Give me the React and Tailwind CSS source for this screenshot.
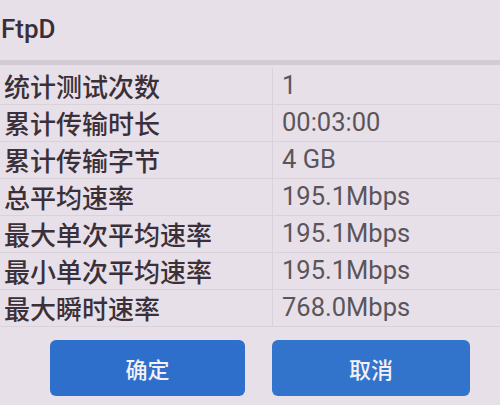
import React from "react";

const rows = [
  ["统计测试次数", "1"],
  ["累计传输时长", "00:03:00"],
  ["累计传输字节", "4 GB"],
  ["总平均速率", "195.1Mbps"],
  ["最大单次平均速率", "195.1Mbps"],
  ["最小单次平均速率", "195.1Mbps"],
  ["最大瞬时速率", "768.0Mbps"],
];

export default function App() {
  return (
    <div
      className="w-[500px] h-[405px] overflow-hidden bg-[#e7e0e8] flex flex-col"
      style={{ fontFamily: 'Roboto, "Noto Sans CJK SC", sans-serif' }}
    >
      <div className="h-[60px] flex items-center pl-[1px] pb-[1px]">
        <span className="text-[26px] font-medium text-[#3a2f38]">FtpD</span>
      </div>
      <div className="h-[5px] bg-[#d2cbd3]" />
      <div className="mt-[3px] flex flex-col">
        {rows.map(([k, v]) => (
          <div key={k} className="h-[37px] flex border-b border-[#d9d2da]">
            <div className="w-[273px] shrink-0 flex items-center pl-[4px] border-r border-[#d9d2da]">
              <span
                className="text-[26px] leading-none text-[#3b3039] font-medium"
                style={{ fontFamily: '"Noto Sans CJK SC", sans-serif' }}
              >
                {k}
              </span>
            </div>
            <div className="flex-1 flex items-center pl-[9px]">
              <span className="text-[25.5px] leading-none text-[#5b555b]">{v}</span>
            </div>
          </div>
        ))}
      </div>
      <div className="mt-[13px] flex pl-[50px] gap-[27px]">
        <button
          className="w-[195px] h-[56px] rounded-[6px] bg-[#2d6fcb] text-[#f4f1f6] text-[22px] font-medium flex items-center justify-center"
          style={{ fontFamily: '"Noto Sans CJK SC", sans-serif' }}
        >
          确定
        </button>
        <button
          className="w-[198px] h-[56px] rounded-[6px] bg-[#3274cc] text-[#f4f1f6] text-[22px] font-medium flex items-center justify-center"
          style={{ fontFamily: '"Noto Sans CJK SC", sans-serif' }}
        >
          取消
        </button>
      </div>
    </div>
  );
}
